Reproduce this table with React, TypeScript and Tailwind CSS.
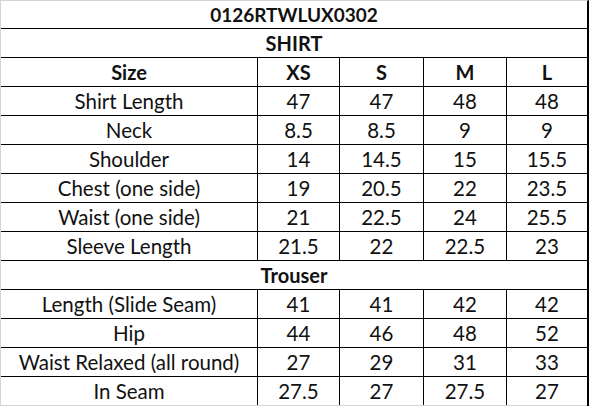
const sizes = ['XS', 'S', 'M', 'L']

const shirt: [string, string[]][] = [
  ['Shirt Length', ['47', '47', '48', '48']],
  ['Neck', ['8.5', '8.5', '9', '9']],
  ['Shoulder', ['14', '14.5', '15', '15.5']],
  ['Chest (one side)', ['19', '20.5', '22', '23.5']],
  ['Waist (one side)', ['21', '22.5', '24', '25.5']],
  ['Sleeve Length', ['21.5', '22', '22.5', '23']],
]

const trouser: [string, string[]][] = [
  ['Length (Slide Seam)', ['41', '41', '42', '42']],
  ['Hip', ['44', '46', '48', '52']],
  ['Waist Relaxed (all round)', ['27', '29', '31', '33']],
  ['In Seam', ['27.5', '27', '27.5', '27']],
]

function Row({ label, values, bold, last }: { label: string; values: string[]; bold?: boolean; last?: boolean }) {
  return (
    <div
      className={`grid grid-cols-[257px_82px_84px_83px_80px] h-[29px] border-b ${last ? 'border-[#d4d4d4]' : 'border-black'} ${bold ? 'font-bold text-[20px]' : 'text-[20.5px]'}`}
    >
      <div className="flex items-center justify-center border-r border-black">{label}</div>
      {values.map((v, i) => (
        <div key={i} className={`flex items-center justify-center ${i < 3 ? 'border-r border-black' : ''}`}>
          {v}
        </div>
      ))}
    </div>
  )
}

function Banner({ text }: { text: string }) {
  return (
    <div className="h-[29px] flex items-center justify-center border-b border-black font-bold text-[20px]">{text}</div>
  )
}

export default function App() {
  return (
    <div
      className="w-[589px] h-[407px] bg-white leading-none text-[#111]"
      style={{ fontFamily: 'Lato, "Open Sans", sans-serif' }}
    >
      <div className="border-l border-t border-[#d4d4d4] border-r-2 border-r-black">
        <div className="h-[28px] flex items-center justify-center border-b border-black font-bold text-[19px]">0126RTWLUX0302</div>
        <Banner text="SHIRT" />
        <Row label="Size" values={sizes} bold />
        {shirt.map(([l, v]) => (
          <Row key={l} label={l} values={v} />
        ))}
        <Banner text="Trouser" />
        {trouser.map(([l, v], i) => (
          <Row key={l} label={l} values={v} last={i === trouser.length - 1} />
        ))}
      </div>
    </div>
  )
}
